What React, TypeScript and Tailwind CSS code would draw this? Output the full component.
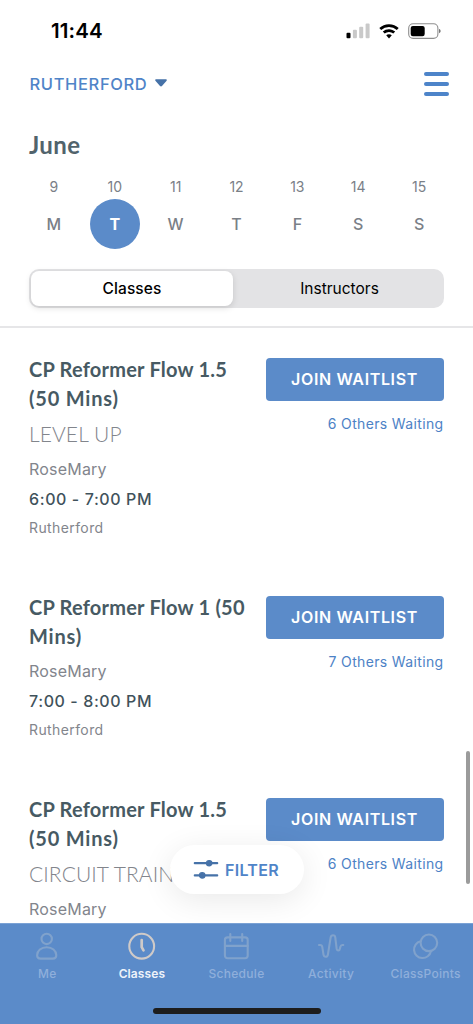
import { useState } from 'react'
import type { ReactNode } from 'react'

type ClassItem = {
  id: number
  title: string[]
  level?: string
  instructor: string
  time: string
  location: string
  waiting: number
}

const DAYS = [
  { date: 9, label: 'M' },
  { date: 10, label: 'T' },
  { date: 11, label: 'W' },
  { date: 12, label: 'T' },
  { date: 13, label: 'F' },
  { date: 14, label: 'S' },
  { date: 15, label: 'S' },
]

const CLASSES: ClassItem[] = [
  {
    id: 1,
    title: ['CP Reformer Flow 1.5', '(50 Mins)'],
    level: 'LEVEL UP',
    instructor: 'RoseMary',
    time: '6:00 - 7:00 PM',
    location: 'Rutherford',
    waiting: 6,
  },
  {
    id: 2,
    title: ['CP Reformer Flow 1 (50', 'Mins)'],
    instructor: 'RoseMary',
    time: '7:00 - 8:00 PM',
    location: 'Rutherford',
    waiting: 7,
  },
  {
    id: 3,
    title: ['CP Reformer Flow 1.5', '(50 Mins)'],
    level: 'CIRCUIT TRAIN',
    instructor: 'RoseMary',
    time: '',
    location: '',
    waiting: 6,
  },
]

const TABS: { name: string; icon: ReactNode }[] = [
  {
    name: 'Me',
    icon: (
      <>
        <circle cx="13.7" cy="6.9" r="5.2" />
        <path d="M13.7 15.2c-5.4 0-9.6 3.6-9.6 8 0 2.2 1.4 3.4 3.5 3.4h12.2c2.1 0 3.5-1.2 3.5-3.4 0-4.4-4.2-8-9.6-8z" />
      </>
    ),
  },
  {
    name: 'Classes',
    icon: (
      <>
        <circle cx="13.7" cy="14.2" r="12.4" />
        <path d="M13.7 8v7.2l1.8 3.2" strokeWidth="2.7" />
      </>
    ),
  },
  {
    name: 'Schedule',
    icon: (
      <>
        <rect x="2.9" y="5.4" width="22.8" height="20.8" rx="2.6" />
        <path d="M2.9 13.9h22.8M8.3 2v7M20.2 2v7" />
      </>
    ),
  },
  {
    name: 'Activity',
    icon: (
      <path d="M2 13h1.2c1.4 0 1.9.8 2.1 2.2l1.2 7.4c.3 1.6 1 2.2 2.2 2.2s2-.7 2.2-2.2l2.7-17c.3-1.6 1.2-2.4 2.4-2.4s2.1.8 2.3 2.4l1.3 10.8c.2 1.4.8 2.1 1.7 2.1s1.4-.6 1.6-1.7l.5-2c.3-1.2.9-1.8 2-1.8h.9" />
    ),
  },
  {
    name: 'ClassPoints',
    icon: (
      <>
        <circle cx="16.9" cy="10.8" r="8.3" />
        <path d="M8.6 9.3a8.5 8.5 0 1 0 10.3 9.9" />
      </>
    ),
  },
]

function StatusBar() {
  return (
    <div className="flex h-[62px] shrink-0 items-center justify-between pl-[51px] pr-[32px] text-black">
      <span className="text-[20.5px] font-semibold leading-6 tracking-[0.1px]">11:44</span>
      <div className="flex items-center">
        <svg width="25" height="16" viewBox="0 0 25 16">
          <rect x="0.5" y="9.7" width="4" height="5.6" rx="1" />
          <rect x="6.9" y="6.8" width="4" height="8.5" rx="1" fill="#c9c9c9" />
          <rect x="13.2" y="3.7" width="4" height="11.6" rx="1" fill="#c9c9c9" />
          <rect x="19.6" y="0.4" width="4" height="14.9" rx="1" fill="#c9c9c9" />
        </svg>
        <svg className="ml-[8px]" width="20" height="15" viewBox="0 0 20 15">
          <path d="M10 .2c3.8 0 7.2 1.4 9.7 3.8l-1.9 2A11.4 11.4 0 0 0 10 2.9 11.4 11.4 0 0 0 2.2 6L.3 4A14 14 0 0 1 10 .2z" />
          <path d="M10 5.2c2.4 0 4.6.9 6.2 2.4l-1.9 2A6.3 6.3 0 0 0 10 7.9a6.3 6.3 0 0 0-4.3 1.7l-1.9-2A9 9 0 0 1 10 5.2z" />
          <path d="M10 10.2c1.1 0 2.1.4 2.8 1L10 14.4l-2.8-3.2c.7-.6 1.7-1 2.8-1z" />
        </svg>
        <svg className="ml-[9px]" width="33" height="16" viewBox="0 0 33 16">
          <rect x="0.7" y="0.8" width="29.2" height="14.6" rx="4.4" fill="none" stroke="#8e8e8e" strokeWidth="1.1" />
          <rect x="2.7" y="2.9" width="14" height="10.4" rx="2.2" />
          <path d="M31.2 5.9c.9.4 1.3 1.2 1.3 2.2s-.4 1.8-1.3 2.2z" fill="#555" />
        </svg>
      </div>
    </div>
  )
}

function ClassCard({ item }: { item: ClassItem }) {
  return (
    <div className="flex items-start justify-between pl-[29px] pr-[29.5px] pb-[51px]">
      <div className="whitespace-nowrap text-[#82858c]">
        <h2 className="font-[Lato,sans-serif] text-[20px] font-bold leading-[29px] text-[#475a63]">
          <span className="block tracking-[0.22px]">{item.title[0]}</span>
          <span className="block tracking-[0.8px]">{item.title[1]}</span>
        </h2>
        {item.level && (
          <p className="h-9 pt-[6px] font-[Lato,sans-serif] text-[21px] font-light leading-[29px] tracking-[0.1px]">
            {item.level}
          </p>
        )}
        <p className="mt-[5px] text-[16px] leading-[30px] tracking-[0.2px]">{item.instructor}</p>
        <p className="h-[29px] text-[16px] font-medium leading-[31px] tracking-[0.6px] text-[#3f525b]">{item.time}</p>
        <p className="h-[29px] text-[14px] leading-[30px] tracking-[0.4px]">{item.location}</p>
      </div>
      <div className="flex flex-col items-end pt-[2.5px]">
        <button className="h-[43.5px] w-[178px] rounded-[4px] bg-[#5b8bc9] text-[16px] font-semibold tracking-[0.65px] text-white">
          JOIN WAITLIST
        </button>
        <p className="mt-[13px] text-[14px] leading-5 tracking-[0.35px] text-[#4d82c6]">
          {item.waiting} Others Waiting
        </p>
      </div>
    </div>
  )
}

export default function App() {
  const [day, setDay] = useState(10)
  const [view, setView] = useState('Classes')

  return (
    <div className="relative flex h-[1024px] w-[473px] flex-col overflow-hidden bg-white font-[Inter,sans-serif]">
      <StatusBar />

      {/* Location + menu */}
      <div className="flex h-11 shrink-0 items-center justify-between pl-[29.5px] pr-[24px]">
        <button className="flex items-center gap-[8px] text-[16.5px] font-medium tracking-[0.63px] text-[#4f84c8]">
          RUTHERFORD
          <svg className="-mt-[3px]" width="12" height="8" viewBox="0 0 12 8" fill="#4672a8">
            <path d="M1 .3h10c.8 0 1.1.8.6 1.4L7 7.1c-.5.6-1.5.6-2 0L.4 1.7C-.1 1.1.2.3 1 .3z" />
          </svg>
        </button>
        <button aria-label="Menu" className="flex flex-col gap-[6px]">
          <span className="h-[4px] w-[25px] rounded-full bg-[#4d84c9]" />
          <span className="h-[4px] w-[25px] rounded-full bg-[#4d84c9]" />
          <span className="h-[4px] w-[25px] rounded-full bg-[#4d84c9]" />
        </button>
      </div>

      {/* Month + days */}
      <h1 className="mt-[23px] h-[33px] shrink-0 pl-[29px] font-[Lato,sans-serif] text-[24px] font-bold leading-[32px] tracking-[0.4px] text-[#51636c]">
        June
      </h1>
      <div className="mt-[14px] grid shrink-0 grid-cols-7 px-[23.5px]">
        {DAYS.map((d) => (
          <button key={d.date} onClick={() => setDay(d.date)} className="flex flex-col items-center text-[#7a8087]">
            <span className="h-[22.5px] text-[14px] leading-[21px]">{d.date}</span>
            <span
              className={
                d.date === day
                  ? 'flex size-[50px] items-center justify-center rounded-full bg-[#5b8bc9] text-[16px] font-bold text-white'
                  : 'flex size-[50px] items-center justify-center text-[16px] font-medium'
              }
            >
              {d.label}
            </span>
          </button>
        ))}
      </div>

      {/* Segmented control */}
      <div className="mx-[29px] mt-[20.5px] flex h-[38.5px] shrink-0 rounded-[10px] bg-[#e3e3e5] p-[2px]">
        {['Classes', 'Instructors'].map((name) => (
          <button
            key={name}
            onClick={() => setView(name)}
            className={
              name === view
                ? 'w-[202px] rounded-[8px] bg-white text-[15.5px] font-medium tracking-[0.1px] text-black shadow-[0_2px_6px_rgba(0,0,0,0.13)]'
                : 'flex-1 pl-[4px] text-[15.5px] text-black'
            }
          >
            {name}
          </button>
        ))}
      </div>
      <div className="mt-[18.5px] h-[2px] shrink-0 bg-[#e6e6e8]" />

      {/* Class list */}
      <div className="min-h-0 flex-1 overflow-hidden pt-[27px]">
        {CLASSES.map((item) => (
          <ClassCard key={item.id} item={item} />
        ))}
      </div>

      {/* Tab bar */}
      <nav className="flex h-[101px] shrink-0 flex-col items-center border-t border-[#7ba2d5] bg-[#5b8bc9]">
        <div className="grid w-full grid-cols-5 pt-[8px]">
          {TABS.map((tab) => (
            <button
              key={tab.name}
              className={
                tab.name === 'Classes'
                  ? 'flex flex-col items-center text-[#cfcac8]'
                  : 'flex flex-col items-center text-[#80a2cc]'
              }
            >
              <svg
                width="28"
                height="28"
                viewBox="0 0 28 28"
                fill="none"
                stroke="currentColor"
                strokeWidth="2.1"
                strokeLinecap="round"
                strokeLinejoin="round"
              >
                {tab.icon}
              </svg>
              <span
                className={
                  tab.name === 'Classes'
                    ? 'mt-[6px] text-[12px] font-semibold leading-4 tracking-[0.1px] text-[#eef3fa]'
                    : 'mt-[6px] text-[12px] font-medium leading-4 tracking-[0.3px] text-[#8fafdb]'
                }
              >
                {tab.name}
              </span>
            </button>
          ))}
        </div>
        <div className="mt-[26px] h-[6px] w-[168px] rounded-full bg-[#1d1d1d]" />
      </nav>

      {/* Scroll thumb */}
      <div className="absolute right-[3.5px] top-[751px] h-[133px] w-[3.5px] rounded-full bg-[#9b9b9b]" />

      {/* Floating filter */}
      <button className="absolute left-[170px] top-[845px] flex h-[49px] w-[134px] items-center rounded-full bg-white pl-[23px] text-[16px] font-medium text-[#4f84c8] shadow-[0_6px_32px_rgba(0,0,0,0.09)]">
        <svg width="26" height="22" viewBox="0 0 26 22" fill="#4672a8" stroke="#4672a8" strokeWidth="2.2" strokeLinecap="round">
          <path d="M1.8 4.2h22.4M1.8 16.4h22.4" />
          <circle cx="16.2" cy="4.2" r="2.7" strokeWidth="1.2" />
          <circle cx="9.2" cy="16.4" r="2.7" strokeWidth="1.2" />
        </svg>
        <span className="ml-[6px] font-semibold tracking-[0.3px]">FILTER</span>
      </button>
    </div>
  )
}
